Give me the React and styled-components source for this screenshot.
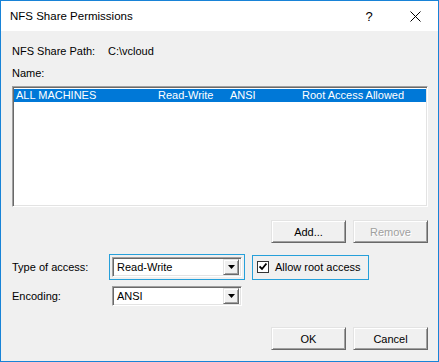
import styled, { createGlobalStyle } from 'styled-components';

const GlobalStyle = createGlobalStyle`
    html, body {
        margin: 0;
        padding: 0;
        background: #f0f0f0;
    }
    * {
        box-sizing: border-box;
    }
`;

const Window = styled.div`
    width: 439px;
    height: 362px;
    border: 1px solid #1883d7;
    background: #f0f0f0;
    display: flex;
    flex-direction: column;
    font-family: 'Liberation Sans', Arial, sans-serif;
    font-size: 11px;
    color: #000;
`;

const TitleBar = styled.div`
    height: 30px;
    background: #fff;
    display: flex;
    align-items: center;
    padding-left: 9px;
`;

const Title = styled.div`
    flex: 1;
    font-size: 11.5px;
    color: #000;
`;

const CaptionButton = styled.div`
    width: 46px;
    height: 30px;
    display: flex;
    align-items: center;
    justify-content: center;
    font-size: 13px;
    color: #000;
`;

const Content = styled.div`
    flex: 1;
    display: flex;
    flex-direction: column;
    padding: 0 10px 0 11px;
`;

const Line = styled.div`
    height: 13px;
    line-height: 13px;
    margin-top: ${(p) => p.$top || 0}px;
    display: flex;
`;

const PathLabel = styled.span`
    width: 96px;
`;

const ListBox = styled.div`
    margin-top: 6px;
    height: 121px;
    background: #fff;
    border: 1px solid;
    border-color: #a0a0a0 #fff #fff #a0a0a0;
    box-shadow: inset 1px 1px #696969, inset -1px -1px #e3e3e3;
    padding: 2px 1px 1px 1px;
`;

const ListRow = styled.div`
    display: grid;
    grid-template-columns: 142px 72px 72px 1fr;
    height: 13px;
    line-height: 13px;
    padding-left: 2px;
    background: ${(p) => (p.$selected ? '#0078d7' : 'transparent')};
    color: ${(p) => (p.$selected ? '#fff' : '#000')};
    white-space: nowrap;
`;

const ButtonRow = styled.div`
    display: flex;
    justify-content: flex-end;
    gap: 7px;
    margin-top: ${(p) => p.$top}px;
`;

const Button = styled.div`
    width: 75px;
    height: 23px;
    display: flex;
    align-items: center;
    justify-content: center;
    background: #f0f0f0;
    border: 1px solid;
    border-color: #e3e3e3 #696969 #696969 #e3e3e3;
    box-shadow: inset 1px 1px #fff, inset -1px -1px #a0a0a0;
    color: ${(p) => (p.$disabled ? '#a0a0a0' : '#000')};
    text-shadow: ${(p) => (p.$disabled ? '1px 1px #fff' : 'none')};
`;

const FieldRow = styled.div`
    display: flex;
    align-items: center;
    margin-top: ${(p) => p.$top}px;
`;

const FieldLabel = styled.div`
    width: 97px;
`;

const FocusRing = styled.div`
    border: 1px solid ${(p) => (p.$focused ? '#26a0da' : 'transparent')};
    padding: 2px;
    display: flex;
    align-items: center;
`;

const Combo = styled.div`
    width: 130px;
    height: 20px;
    background: #fff;
    border: 1px solid;
    border-color: #a0a0a0 #fff #fff #a0a0a0;
    box-shadow: inset 1px 1px #696969, inset -1px -1px #e3e3e3;
    display: flex;
    align-items: center;
    padding: 2px 2px 2px 4px;
`;

const ComboText = styled.span`
    flex: 1;
`;

const DropButton = styled.div`
    width: 16px;
    height: 16px;
    background: #f0f0f0;
    border: 1px solid;
    border-color: #e3e3e3 #696969 #696969 #e3e3e3;
    box-shadow: inset 1px 1px #fff, inset -1px -1px #a0a0a0;
    display: flex;
    align-items: center;
    justify-content: center;
`;

const CheckRing = styled.div`
    margin-left: 7px;
    height: 25px;
    border: 1px solid #26a0da;
    display: flex;
    align-items: center;
    padding: 0 7px 0 4px;
    gap: 6px;
`;

const CheckBox = styled.div`
    width: 12px;
    height: 12px;
    background: #fff;
    border: 1px solid #333;
    display: flex;
    align-items: center;
    justify-content: center;
`;

const Arrow = () => (
    <svg width='7' height='4' viewBox='0 0 7 4'>
        <path d='M0 0h7L3.5 4z' fill='#000' />
    </svg>
);

const ComboBox = ({ value, focused }) => (
    <FocusRing $focused={focused}>
        <Combo>
            <ComboText>{value}</ComboText>
            <DropButton>
                <Arrow />
            </DropButton>
        </Combo>
    </FocusRing>
);

const App = () => {
    return (
        <>
            <GlobalStyle />
            <Window>
                <TitleBar>
                    <Title>NFS Share Permissions</Title>
                    <CaptionButton>?</CaptionButton>
                    <CaptionButton>
                        <svg width='11' height='11' viewBox='0 0 11 11'>
                            <path d='M0.5 0.5l10 10M10.5 0.5l-10 10' stroke='#000' strokeWidth='1' />
                        </svg>
                    </CaptionButton>
                </TitleBar>
                <Content>
                    <Line $top={14}>
                        <PathLabel>NFS Share Path:</PathLabel>
                        <span>C:\vcloud</span>
                    </Line>
                    <Line $top={9}>Name:</Line>
                    <ListBox>
                        <ListRow $selected>
                            <span>ALL MACHINES</span>
                            <span>Read-Write</span>
                            <span>ANSI</span>
                            <span>Root Access Allowed</span>
                        </ListRow>
                    </ListBox>
                    <ButtonRow $top={13}>
                        <Button>Add...</Button>
                        <Button $disabled>Remove</Button>
                    </ButtonRow>
                    <FieldRow $top={11}>
                        <FieldLabel>Type of access:</FieldLabel>
                        <ComboBox value='Read-Write' focused />
                        <CheckRing>
                            <CheckBox>
                                <svg width='8' height='8' viewBox='0 0 8 8'>
                                    <path d='M0.5 3.5l2.5 2.5 4.5-5.5' stroke='#000' strokeWidth='1.8' fill='none' />
                                </svg>
                            </CheckBox>
                            <span>Allow root access</span>
                        </CheckRing>
                    </FieldRow>
                    <FieldRow $top={3}>
                        <FieldLabel>Encoding:</FieldLabel>
                        <ComboBox value='ANSI' />
                    </FieldRow>
                    <ButtonRow $top={18}>
                        <Button>OK</Button>
                        <Button>Cancel</Button>
                    </ButtonRow>
                </Content>
            </Window>
        </>
    );
};

export default App;
